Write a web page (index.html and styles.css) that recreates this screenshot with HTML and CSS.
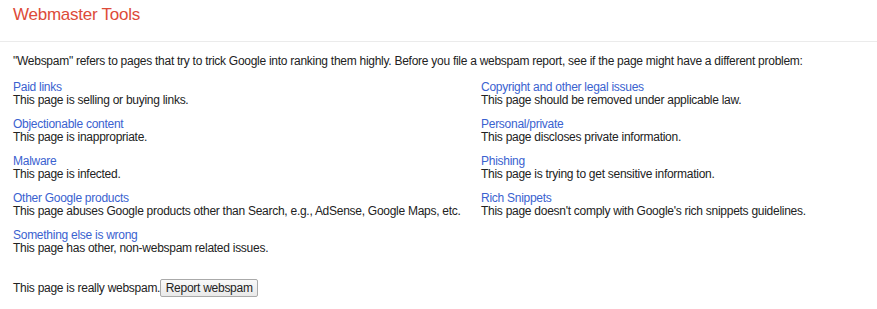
FILE: index.html
```html
<!DOCTYPE html>
<html lang="en">
<head>
  <meta charset="UTF-8" />
  <title>Webmaster Tools</title>
  <link rel="stylesheet" href="styles.css">
</head>
<body>

  <header>
    <h1>Webmaster Tools</h1>
  </header>

  <div class="container">
    <p class="intro">"Webspam" refers to pages that try to trick Google into ranking them highly. Before you file a webspam report, see if the page might have a different problem:</p>

    <div class="grid">
      <div class="item">
        <a href="#">Paid links</a>
        <div>This page is selling or buying links.</div>
      </div>
      <div class="item">
        <a href="#">Copyright and other legal issues</a>
        <div>This page should be removed under applicable law.</div>
      </div>
      <div class="item">
        <a href="#">Objectionable content</a>
        <div>This page is inappropriate.</div>
      </div>
      <div class="item">
        <a href="#">Personal/private</a>
        <div>This page discloses private information.</div>
      </div>
      <div class="item">
        <a href="#">Malware</a>
        <div>This page is infected.</div>
      </div>
      <div class="item">
        <a href="#">Phishing</a>
        <div>This page is trying to get sensitive information.</div>
      </div>
      <div class="item">
        <a href="#">Other Google products</a>
        <div>This page abuses Google products other than Search, e.g., AdSense, Google Maps, etc.</div>
      </div>
      <div class="item">
        <a href="#">Rich Snippets</a>
        <div>This page doesn't comply with Google's rich snippets guidelines.</div>
      </div>
      <div class="item">
        <a href="#">Something else is wrong</a>
        <div>This page has other, non-webspam related issues.</div>
      </div>
    </div>

    <p class="report">This page is really webspam.<button>Report webspam</button></p>
  </div>

</body>
</html>
```

FILE: styles.css
```css
body {
  font-family: Arial, "Liberation Sans", sans-serif;
  font-size: 12px;
  letter-spacing: -0.27px;
  color: #222;
  margin: 0;
  background-color: white;
}

header {
  height: 36px;
  padding: 5px 13px 0;
  border-bottom: 1px solid #ebebeb;
}

header h1 {
  margin: 0;
  font-size: 17px;
  letter-spacing: -0.25px;
  font-weight: normal;
  color: #dd4b39;
  line-height: 20px;
}

.container {
  padding: 0 13px;
}

.intro {
  margin: 12px 0 12px;
  line-height: 15px;
}

.grid {
  display: grid;
  grid-template-columns: 468px 1fr;
  row-gap: 11px;
}

.item {
  line-height: 13px;
}

.item div {
  height: 13px;
}

.item a {
  display: block;
  height: 13px;
  color: #3a62d0;
  text-decoration: none;
}

.report {
  margin: 24px 0 0;
  display: flex;
  align-items: center;
  line-height: 13px;
}

.report button {
  font-family: Arial, "Liberation Sans", sans-serif;
  font-size: 12px;
  letter-spacing: -0.27px;
  color: #222;
  margin-left: 0;
  width: 98px;
  height: 18px;
  padding: 0;
  background: linear-gradient(#f9f9f9, #e9e9e9);
  border: 1px solid #aaa;
  border-radius: 2px;
}
```
